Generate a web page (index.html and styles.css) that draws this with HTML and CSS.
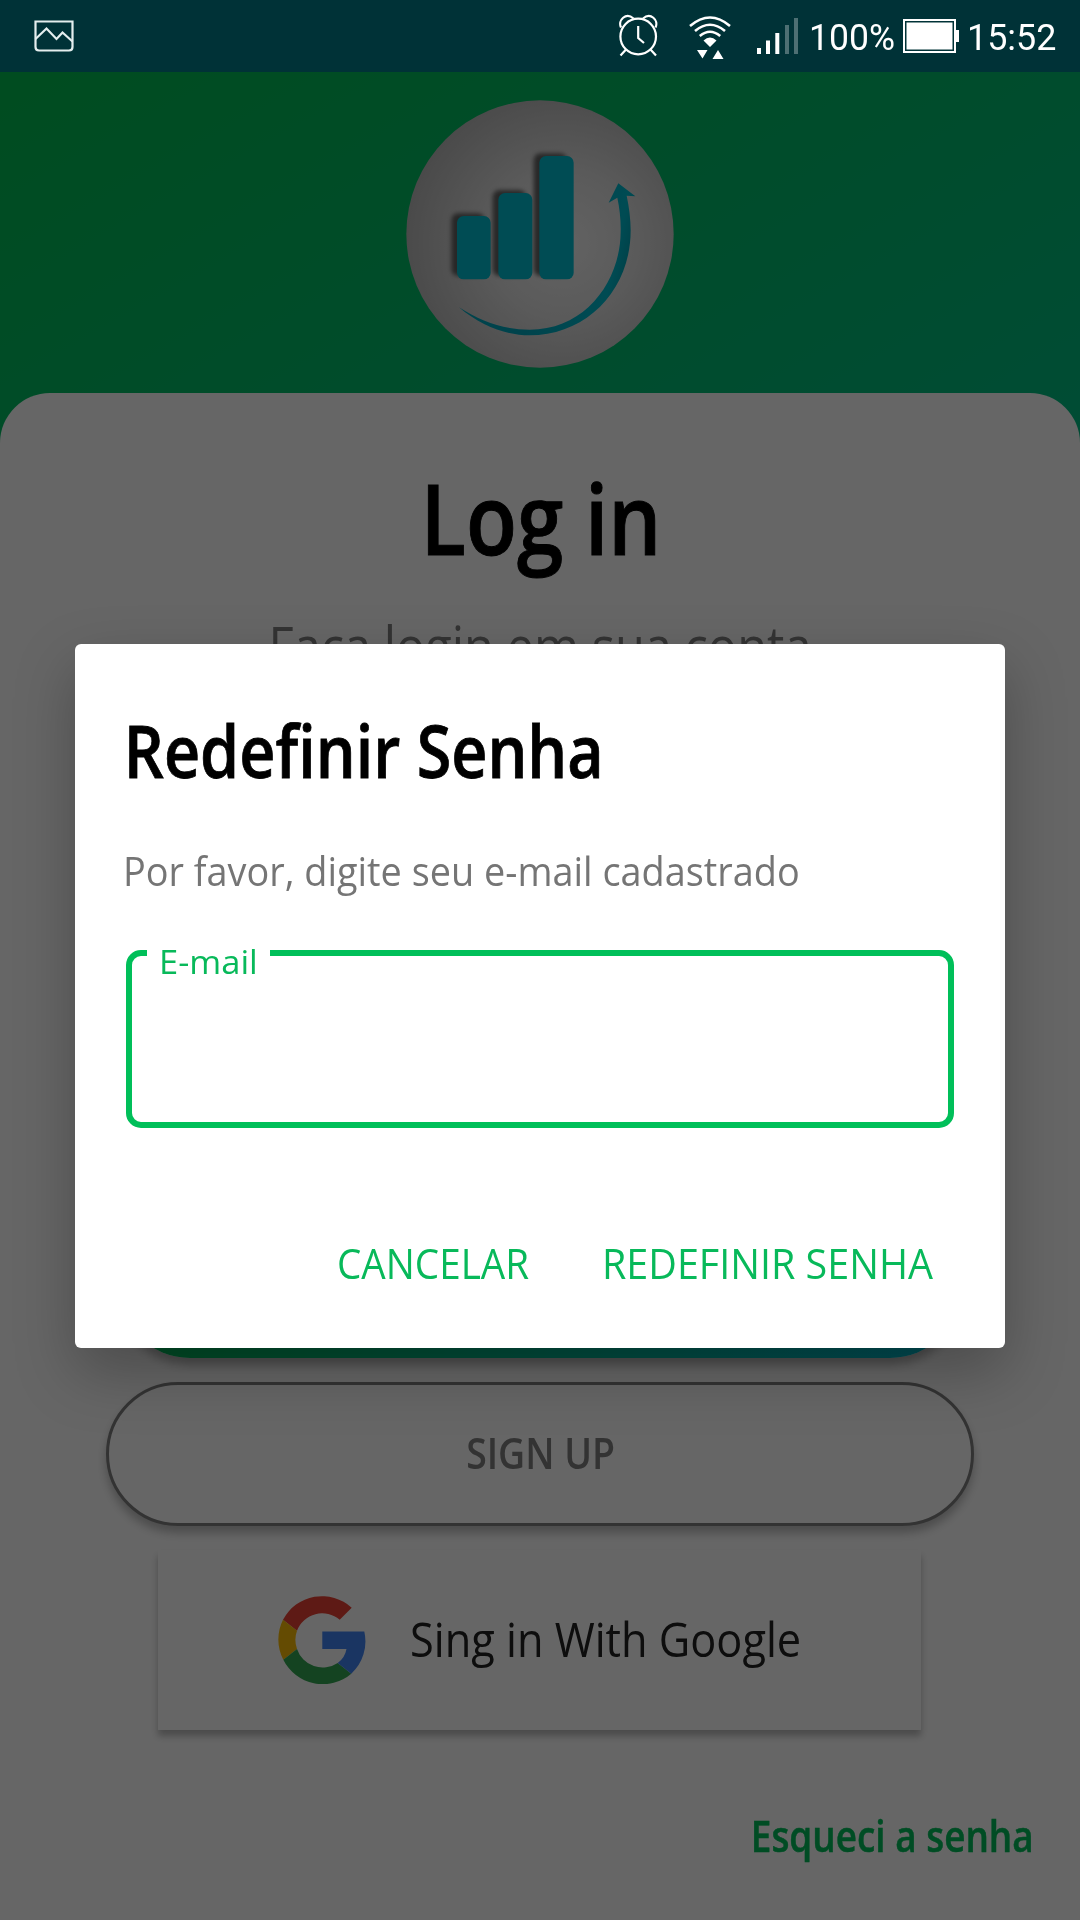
FILE: index.html
```html
<!DOCTYPE html>
<html lang="pt-BR">
<head>
<meta charset="utf-8">
<title>Log in</title>
<link rel="stylesheet" href="styles.css">
</head>
<body>
<div class="screen">
  <header class="status">
    <svg class="status-image" width="40" height="32" viewBox="0 0 40 32" fill="none" stroke="#e4eeee" stroke-width="2.200">
      <path d="M1.5 1.5H38.5V27Q38.5 30.5 35 30.5H5Q1.5 30.5 1.5 27Z"/>
      <path d="M1.5 19L12.5 8.5L22.5 19L28.5 12.5L38.5 21.5"/>
    </svg>
    <svg class="status-alarm" width="39" height="44" viewBox="0 0 39 44" fill="none" stroke="#fff" stroke-width="2.200">
      <circle cx="19.2" cy="22.5" r="17.8"/>
      <path d="M19.2 12V24L25 29M2 13.5C-1.5 6 7 -2 14.5 4.500M36.500 13.500C40 6 31.500 -2 24 4.500M7 35.500L1.500 41.500M31.500 35.500L37 41.500"/>
    </svg>
    <svg class="status-wifi" width="42" height="44" viewBox="0 0 42 44" fill="none" stroke="#fff" stroke-width="2.600">
      <path d="M1 10Q21 -7 41 10M6 15Q21 2.500 36 15M10.800 20Q21 11.500 31.200 20"/>
      <path d="M14.500 24.500Q21 18.500 27.500 24.500L21 31ZM8 34H18.500L13.500 42.500ZM23.500 43L29 34L34.500 43Z" fill="#fff" stroke="none"/>
    </svg>
    <svg class="status-signal" width="41" height="36" viewBox="0 0 41 36" fill="#fff">
      <path d="M0 30h4v6H0zM9 22.500h4V36H9zM18.300 15h4V36h-4z"/>
      <path d="M28 7h4v29h-4zM37 0h4v36h-4z" opacity=".3"/>
    </svg>
    <span class="status-text status-percent">100%</span>
    <svg class="status-battery" width="56" height="34" viewBox="0 0 56 34" fill="#fff">
      <path d="M1 1H52V33H1Z" fill="none" stroke="#fff" stroke-width="2"/>
      <path d="M3.500 3.500H49.500V30.500H3.500ZM53 11H56V23H53Z"/>
    </svg>
    <span class="status-text status-time">15:52</span>
  </header>

  <main class="login">
    <div class="brand">
      <svg width="268" height="268" viewBox="49 29 804 804">
        <defs>
          <radialGradient id="disc" gradientUnits="userSpaceOnUse" cx="520" cy="460" r="480">
            <stop offset="0" stop-color="#f6f6f6"/>
            <stop offset=".45" stop-color="#e2e2e2"/>
            <stop offset="1" stop-color="#b8b8b8"/>
          </radialGradient>
          <linearGradient id="sweep" gradientUnits="userSpaceOnUse" x1="460" y1="500" x2="735" y2="560">
            <stop offset="0" stop-color="#00a9bf"/>
            <stop offset=".75" stop-color="#00bcd0"/>
            <stop offset="1" stop-color="#0097a8"/>
          </linearGradient>
          <filter id="soft" x="-30%" y="-30%" width="160%" height="160%"><feGaussianBlur stdDeviation="6"/></filter>
        </defs>
        <circle cx="451" cy="431" r="401" fill="url(#disc)"/>
        <g fill="#505050" opacity=".85" filter="url(#soft)">
          <rect x="185" y="369" width="100" height="188" rx="20"/>
          <rect x="309" y="299" width="100" height="258" rx="20"/>
          <rect x="432" y="189" width="100" height="368" rx="20"/>
        </g>
        <g fill="#00bed2">
          <rect x="202" y="377" width="101" height="190" rx="20"/>
          <rect x="326" y="308" width="102" height="259" rx="20"/>
          <rect x="449" y="197" width="103" height="370" rx="20"/>
        </g>
        <path fill="url(#sweep)" d="M208 651C275 708 350 735 420 735C590 735 723 600 723 420C723 385 718 350 711 316L737 318L686 279L657 337L683 322C690 355 694 390 693 425C692 570 590 718 420 718C345 718 275 695 208 651Z"/>
      </svg>
    </div>
    <section class="sheet">
      <h1 class="sheet-title">Log in</h1>
      <p class="sheet-subtitle">Faça login em sua conta</p>
      <button class="pill pill-primary" aria-label="Log in"></button>
      <button class="pill pill-outline"><span>SIGN UP</span></button>
      <button class="google">
        <svg width="88" height="88" viewBox="0 0 88 88">
          <path fill="#ea4335" d="M5 23.700A44 44 0 0 1 73.700 11.700L61.700 23.700A27 27 0 0 0 19 34.700Z"/>
          <path fill="#fbbc05" d="M5 23.700A44 44 0 0 0 5.300 63.700L19 53A27 27 0 0 1 19 34.700Z"/>
          <path fill="#34a853" d="M5.300 63.700A44 44 0 0 0 73.300 77.700L59.700 67A27 27 0 0 1 19 53Z"/>
          <path fill="#4285f4" d="M44.300 35.500H86.300A44 44 0 0 1 73.300 77.700L59.700 67A22 22 0 0 0 68.500 53H44.300Z"/>
        </svg>
        <span>Sing in With Google</span>
      </button>
      <a class="forgot">Esqueci a senha</a>
    </section>
  </main>

  <div class="scrim">
    <div class="dialog" role="dialog">
      <h2 class="dialog-title">Redefinir Senha</h2>
      <p class="dialog-text">Por favor, digite seu e-mail cadastrado</p>
      <div class="field"><label class="field-label"><span>E-mail</span></label></div>
      <div class="actions">
        <button class="action action-cancel"><span>CANCELAR</span></button>
        <button class="action action-reset"><span>REDEFINIR SENHA</span></button>
      </div>
    </div>
  </div>
</div>
</body>
</html>
```
FILE: styles.css
```css
* { box-sizing: border-box; margin: 0; }

body { font-family: "Open Sans", sans-serif; background: #666; }

button { border: 0; background: none; padding: 0; font: inherit; color: inherit; }
svg { display: block; flex: none; }
span { display: block; white-space: nowrap; transform-origin: left center; }

.screen {
  position: relative;
  width: 1080px;
  height: 1920px;
  overflow: hidden;
  display: flex;
  flex-direction: column;
}

/* Status bar */
.status {
  position: relative;
  z-index: 2;
  flex: none;
  height: 72px;
  padding-left: 34px;
  display: flex;
  align-items: center;
  background: #003237;
  color: #fff;
}
.status-alarm { margin-left: 545px; }
.status-wifi { margin: 3px 0 0 31px; }
.status-signal { margin-left: 26px; }
.status-text { font: 37px/44px Roboto, sans-serif; margin-top: 3px; }
.status-percent { margin-left: 11px; width: 94px; transform: scaleX(.96); }
.status-time { margin-left: 8px; transform: scaleX(.97); }

/* Login screen */
.login {
  flex: 1;
  display: flex;
  flex-direction: column;
  background: linear-gradient(150.600deg, #00bf50, #00bcd4);
}
.brand {
  flex: none;
  height: 321px;
  padding-top: 28px;
  display: flex;
  justify-content: center;
}
.sheet {
  flex: 1;
  padding-top: 74px;
  display: flex;
  flex-direction: column;
  align-items: center;
  background: #fff;
  border-radius: 50px 50px 0 0;
}
.sheet-title {
  padding-left: 3px;
  font-size: 98px;
  font-weight: 600;
  line-height: 100px;
  color: #000;
  -webkit-text-stroke: 1px #000;
  transform: scaleX(.853);
}
.sheet-subtitle {
  margin-top: 48px;
  font-size: 54px;
  line-height: 60px;
  color: #808080;
  white-space: nowrap;
  transform: scaleX(.902);
}
.pill {
  flex: none;
  height: 144px;
  border-radius: 72px;
  box-shadow: 0 7px 10px rgba(0, 0, 0, .26);
}
.pill-primary {
  margin-top: 539px;
  width: 844px;
  background: linear-gradient(90deg, #00bf59, #00bcd4);
}
.pill-outline {
  margin-top: 24px;
  width: 868px;
  padding: 0 0 2px 2px;
  display: flex;
  align-items: center;
  justify-content: center;
  border: 3px solid #808080;
  background: #fff;
  color: #808080;
  font-size: 43px;
  font-weight: 600;
  line-height: 50px;
}
.pill-outline span { transform: scaleX(.87); transform-origin: center; }
.google {
  flex: none;
  margin: 24px 2px 0 0;
  width: 763px;
  height: 180px;
  padding-left: 120px;
  display: flex;
  align-items: center;
  gap: 44px;
  background: #fff;
  box-shadow: 0 6px 7px rgba(0, 0, 0, .27);
  color: #212121;
  font-size: 48px;
  line-height: 54px;
}
.google span { margin-bottom: 2px; transform: scaleX(.902); }
.forgot {
  align-self: flex-end;
  margin: 81px 46px 0 0;
  font-size: 43px;
  font-weight: 600;
  line-height: 50px;
  color: #00bf5a;
  -webkit-text-stroke: .5px #00bf5a;
  transform: scaleX(.858);
  transform-origin: right center;
}

/* Modal layer covers the login screen */
.scrim {
  position: absolute;
  inset: 0;
  z-index: 1;
  padding-top: 644px;
  display: flex;
  align-items: flex-start;
  justify-content: center;
  background: rgba(0, 0, 0, .6);
}
.dialog {
  width: 930px;
  height: 704px;
  padding: 66px 47px 0;
  background: #fff;
  border-radius: 6px;
  box-shadow: 0 24px 60px rgba(0, 0, 0, .26);
}
.dialog-title {
  padding-left: 2px;
  font-size: 72px;
  font-weight: 600;
  line-height: 80px;
  color: #000;
  -webkit-text-stroke: .8px #000;
  white-space: nowrap;
  transform: scaleX(.873);
  transform-origin: left center;
}
.dialog-text {
  padding-left: 1px;
  margin-top: 55px;
  font-size: 41px;
  line-height: 50px;
  color: #757575;
  white-space: nowrap;
  transform: scaleX(.923);
  transform-origin: left center;
}
.field {
  position: relative;
  margin: 55px 4px 0;
  height: 178px;
  border: 6px solid #00bf59;
  border-radius: 15px;
}
.field-label {
  position: absolute;
  left: 15px;
  top: -8px;
  width: 123px;
  height: 26px;
  padding-left: 12px;
  background: #fff;
  color: #08b95a;
  font-size: 33.500px;
  line-height: 26px;
}
.field-label span { transform: scaleX(1.030); }
.actions {
  margin-top: 105px;
  height: 60px;
  display: flex;
  justify-content: flex-end;
  color: #08b95a;
  font-size: 41.500px;
  line-height: 60px;
}
.action { text-align: left; }
.action-cancel { width: 265px; }
.action-reset { width: 356px; }
.action-cancel span { transform: scaleX(.931); }
.action-reset span { transform: scaleX(.951); }
```
